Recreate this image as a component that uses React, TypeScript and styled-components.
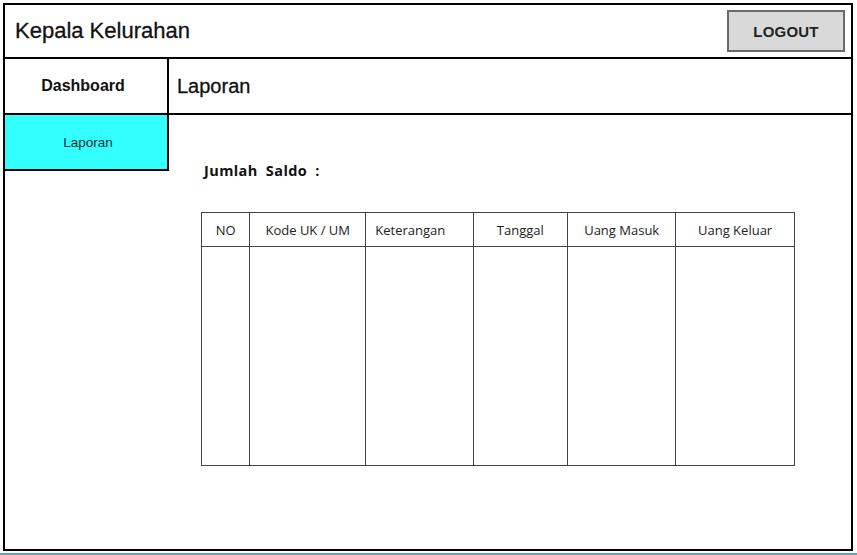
import React from 'react';
import styled, { createGlobalStyle } from 'styled-components';

const GlobalStyle = createGlobalStyle`
    html, body {
        margin: 0;
        padding: 0;
        background: #ffffff;
    }
    body {
        font-family: "Liberation Sans", Arial, sans-serif;
        color: #111;
    }
`;

const Page = styled.div`
    width: 857px;
    height: 555px;
    padding: 3px 0 0 3px;
    box-sizing: border-box;
    position: relative;
    overflow: hidden;
`;

const Frame = styled.div`
    width: 850px;
    height: 548px;
    box-sizing: border-box;
    border: 2px solid #000;
    display: flex;
    flex-direction: column;
`;

const BottomEdge = styled.div`
    position: absolute;
    left: 0;
    right: 0;
    bottom: 0;
    height: 2px;
    background: #6f9cc6;
`;

const Header = styled.header`
    height: 54px;
    box-sizing: border-box;
    border-bottom: 2px solid #000;
    display: flex;
    align-items: center;
    justify-content: space-between;
    padding: 0 6px 0 10px;
`;

const AppTitle = styled.h1`
    margin: 0;
    font-size: 22px;
    font-weight: normal;
    color: #111;
    -webkit-text-stroke: 0.3px #111;
`;

const LogoutButton = styled.button`
    width: 118px;
    height: 42px;
    background: #d9d9d9;
    border: 2px solid #6a6a6a;
    font-family: "Liberation Sans", Arial, sans-serif;
    font-size: 15px;
    font-weight: bold;
    color: #222;
    letter-spacing: 0.2px;
    cursor: pointer;
`;

const Body = styled.div`
    flex: 1;
    display: grid;
    grid-template-columns: 164px 1fr;
    grid-template-rows: 56px 56px 1fr;
`;

interface NavProps {
    $active?: boolean;
}

const NavCell = styled.div<NavProps>`
    box-sizing: border-box;
    border-right: 2px solid #000;
    border-bottom: 2px solid #000;
    display: flex;
    align-items: center;
    justify-content: center;
    padding-right: ${({ $active }) => $active ? '0' : '6px'};
    padding-left: ${({ $active }) => $active ? '4px' : '0'};
    background: ${({ $active }) => $active ? '#33ffff' : '#fff'};
    font-size: ${({ $active }) => $active ? '13.5px' : '16px'};
    font-weight: ${({ $active }) => $active ? 'normal' : 'bold'};
    color: ${({ $active }) => $active ? '#173030' : '#111'};
`;

const PageTitle = styled.div`
    box-sizing: border-box;
    border-bottom: 2px solid #000;
    display: flex;
    align-items: center;
    padding-left: 8px;
    font-size: 20px;
    color: #111;
    -webkit-text-stroke: 0.3px #111;
`;

const Content = styled.main`
    grid-column: 2;
    grid-row: 2 / span 2;
    padding: 46px 0 0 35px;
`;

const hand = `"Comic Sans MS", "Open Sans", "DejaVu Sans", sans-serif`;

const Saldo = styled.div`
    font-family: ${hand};
    font-size: 14.5px;
    line-height: 19px;
    font-weight: bold;
    color: #111;
    letter-spacing: 0.4px;
    word-spacing: 4px;
`;

const Table = styled.table`
    margin: 32px 0 0 -3px;
    border-collapse: collapse;
    width: 594px;
    font-family: ${hand};
    font-size: 13px;
    color: #222;
`;

interface CellProps {
    $w: number;
    $align?: 'left' | 'center';
}

const HeadCell = styled.th<CellProps>`
    width: ${({ $w }) => $w}px;
    height: 33px;
    padding: 0;
    padding-left: ${({ $align }) => $align === 'left' ? '9px' : '0'};
    text-align: ${({ $align }) => $align || 'center'};
    font-weight: normal;
    border: 1px solid #444;
    white-space: nowrap;
`;

const BodyCell = styled.td`
    height: 218px;
    border: 1px solid #444;
    padding: 0;
`;

const columns: { label: string; w: number; align?: 'left' | 'center' }[] = [
    { label: 'NO', w: 48 },
    { label: 'Kode UK / UM', w: 116 },
    { label: 'Keterangan', w: 98, align: 'left' },
    { label: 'Tanggal', w: 95 },
    { label: 'Uang Masuk', w: 108 },
    { label: 'Uang Keluar', w: 119 },
];

export default function App() {
    return (
        <>
            <GlobalStyle />
            <Page>
                <Frame>
                    <Header>
                        <AppTitle>Kepala Kelurahan</AppTitle>
                        <LogoutButton>LOGOUT</LogoutButton>
                    </Header>
                    <Body>
                        <NavCell>Dashboard</NavCell>
                        <PageTitle>Laporan</PageTitle>
                        <NavCell $active>Laporan</NavCell>
                        <Content>
                            <Saldo>Jumlah Saldo :</Saldo>
                            <Table>
                                <thead>
                                    <tr>
                                        {columns.map((c) => (
                                            <HeadCell key={c.label} $w={c.w} $align={c.align}>{c.label}</HeadCell>
                                        ))}
                                    </tr>
                                </thead>
                                <tbody>
                                    <tr>
                                        {columns.map((c) => (
                                            <BodyCell key={c.label} />
                                        ))}
                                    </tr>
                                </tbody>
                            </Table>
                        </Content>
                    </Body>
                </Frame>
                <BottomEdge />
            </Page>
        </>
    );
}
